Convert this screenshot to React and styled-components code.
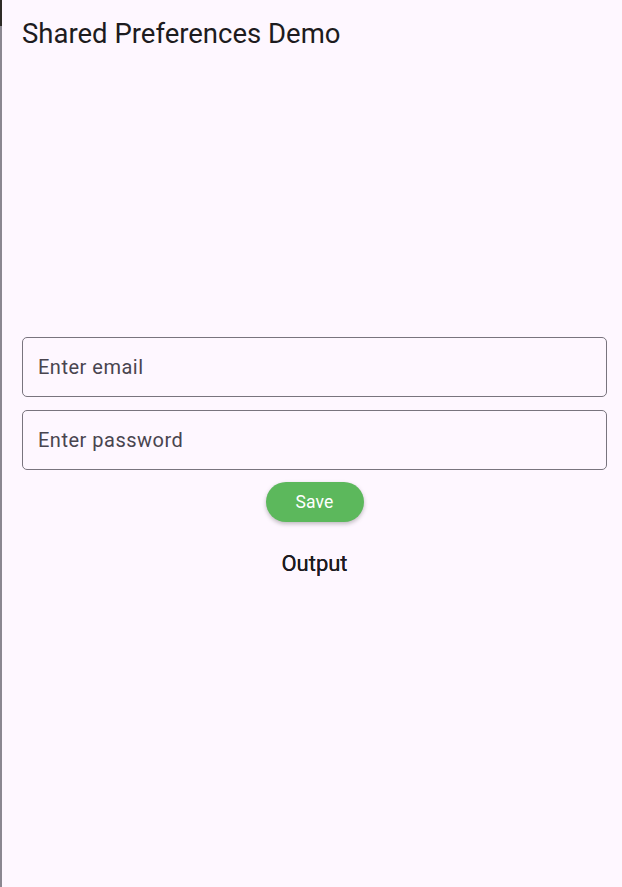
import React from 'react';
import styled, { createGlobalStyle } from 'styled-components';

const GlobalStyle = createGlobalStyle`
  html, body {
    margin: 0;
    padding: 0;
    background: #fef7ff;
  }
  body {
    font-family: Roboto, "Noto Sans", sans-serif;
  }
`;

const Screen = styled.div`
  position: relative;
  min-height: 100vh;
  box-sizing: border-box;
  border-left: 2px solid #8b8791;
  background: #fef7ff;

  &::before {
    content: '';
    position: absolute;
    left: -2px;
    top: 0;
    width: 2px;
    height: 26px;
    background: #2e2b27;
  }
`;

const AppBar = styled.header`
  height: 66px;
  display: flex;
  align-items: center;
  padding: 0 20px;
  font-size: 27.5px;
  color: #1d1b20;
`;

const Body = styled.main`
  display: flex;
  flex-direction: column;
  align-items: center;
  padding: 271px 15px 0 20px;
  gap: 13px;
`;

const Field = styled.input`
  width: 100%;
  height: 60px;
  box-sizing: border-box;
  border: 1px solid #79747e;
  border-radius: 5px;
  background: transparent;
  padding: 0 15px;
  font-family: Roboto, sans-serif;
  font-size: 20px;
  letter-spacing: 0.5px;
  color: #1d1b20;
  outline: none;

  &::placeholder {
    color: #49454f;
  }
`;

const SaveButton = styled.button`
  margin-top: -1px;
  width: 98px;
  height: 40px;
  border: none;
  border-radius: 20px;
  background: #5cb85c;
  color: #ffffff;
  font-family: Roboto, sans-serif;
  font-size: 17.5px;
  font-weight: 400;
  letter-spacing: 0.2px;
  box-shadow: 0 2px 4px rgba(0, 0, 0, 0.25);
`;

const Output = styled.div`
  margin-top: 16px;
  font-size: 22px;
  font-weight: 400;
  color: #1d1b20;
  text-shadow: 0 0 0.4px #1d1b20;
`;

export default function App() {
  return (
    <>
      <GlobalStyle />
      <Screen>
        <AppBar>Shared Preferences Demo</AppBar>
        <Body>
          <Field type="email" placeholder="Enter email" />
          <Field type="password" placeholder="Enter password" />
          <SaveButton>Save</SaveButton>
          <Output>Output</Output>
        </Body>
      </Screen>
    </>
  );
}
